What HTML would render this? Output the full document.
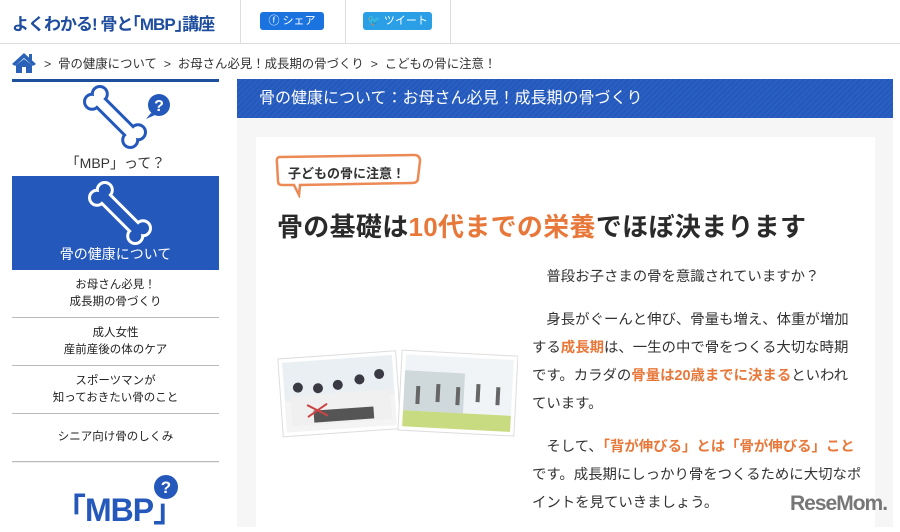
<!DOCTYPE html>
<html><head><meta charset="utf-8"><style>
*{margin:0;padding:0;box-sizing:border-box}
body{width:900px;height:527px;overflow:hidden;background:#fff;font-family:"Liberation Sans","Noto Sans CJK JP",sans-serif;color:#333;position:relative}
.abs{position:absolute}
.hdr{left:0;top:0;width:900px;height:44px;border-bottom:1px solid #ddd}
.logo{left:12px;top:10px;font-size:17px;font-weight:bold;color:#1e4c9e;letter-spacing:-1px}
.vl{top:0;width:1px;height:43px;background:#ddd}
.btn{top:12px;height:18px;border-radius:3px;color:#fff;font-size:11px;line-height:18px;text-align:center}
.bc{left:44px;top:54px;font-size:12.4px;color:#333;white-space:nowrap}
.side{left:12px;top:79px;width:207px}
.menu{height:48px;border-bottom:1px solid #bbb;text-align:center;font-size:11.5px;line-height:17px;display:flex;align-items:center;justify-content:center;color:#222}
.main{left:237px;top:79px;width:656px;height:448px;background:#f6f6f6}
.bar{left:237px;top:79px;width:656px;height:39px;background:repeating-linear-gradient(135deg,#2458bb 0 2px,#2a60c2 2px 4px);color:#fff;font-size:16px;line-height:39px;padding-left:22px}
.card{left:256px;top:137px;width:619px;height:390px;background:#fff}
.p{left:532px;width:330px;font-size:14.4px;line-height:28px;color:#333}
.o{color:#e8783a;font-weight:bold}
</style></head><body>
<div class="abs hdr"></div>
<div class="abs logo">よくわかる! 骨と｢MBP｣講座</div>
<div class="abs vl" style="left:240px"></div>
<div class="abs vl" style="left:345px"></div>
<div class="abs vl" style="left:450px"></div>
<div class="abs btn" style="left:260px;width:64px;background:#1b73e0">ⓕ シェア</div>
<div class="abs btn" style="left:363px;width:69px;background:#2b9fe6">🐦 ツイート</div>
<svg class="abs" style="left:11px;top:52px" width="26" height="22" viewBox="0 0 26 22"><path d="M13 1 L1 12 L4 14 L13 6 L22 14 L25 12 Z" fill="#2a62b8"/><path d="M5 13 L13 7 L21 13 V21 H15 V15 H11 V21 H5 Z" fill="#2a62b8"/><rect x="18" y="2" width="3" height="6" fill="#2a62b8"/></svg>
<div class="abs bc">&gt;&nbsp; 骨の健康について &nbsp;&gt;&nbsp; お母さん必見！成長期の骨づくり &nbsp;&gt;&nbsp; こどもの骨に注意！</div>

<div class="abs side">
 <div style="height:3px;background:#1d4f9a"></div>
 <div style="height:94px;position:relative;background:#fff">
  <svg class="abs" style="left:63px;top:0px" width="100" height="70" viewBox="0 0 100 70">
   <g transform="translate(40,35) rotate(45)"><g stroke="#2458bb" stroke-width="6" fill="#2458bb"><circle cx="-27" cy="-5.5" r="6"/><circle cx="-27" cy="5.5" r="6"/><circle cx="27" cy="-5.5" r="6"/><circle cx="27" cy="5.5" r="6"/><rect x="-27" y="-4.5" width="54" height="9"/></g><g fill="#fff"><circle cx="-27" cy="-5.5" r="6"/><circle cx="-27" cy="5.5" r="6"/><circle cx="27" cy="-5.5" r="6"/><circle cx="27" cy="5.5" r="6"/><rect x="-27" y="-4.5" width="54" height="9"/></g></g>
   <circle cx="84" cy="23" r="11" fill="#2458bb"/><path d="M76 31 L71 37 L80 33Z" fill="#2458bb"/><text x="84" y="29" font-size="16" font-weight="bold" fill="#fff" text-anchor="middle" font-family="Liberation Sans">?</text>
  </svg>
  <div class="abs" style="left:0;width:207px;top:71px;text-align:center;font-size:14px;color:#333">「MBP」って？</div>
 </div>
 <div style="height:94px;position:relative;background:#2458bb">
  <svg class="abs" style="left:68px;top:2px" width="80" height="70" viewBox="0 0 80 70">
   <g transform="translate(40,35) rotate(45)"><g stroke="#fff" stroke-width="6" fill="#fff"><circle cx="-27" cy="-5.5" r="6"/><circle cx="-27" cy="5.5" r="6"/><circle cx="27" cy="-5.5" r="6"/><circle cx="27" cy="5.5" r="6"/><rect x="-27" y="-4.5" width="54" height="9"/></g><g fill="#2458bb"><circle cx="-27" cy="-5.5" r="6"/><circle cx="-27" cy="5.5" r="6"/><circle cx="27" cy="-5.5" r="6"/><circle cx="27" cy="5.5" r="6"/><rect x="-27" y="-4.5" width="54" height="9"/></g></g>
  </svg>
  <div class="abs" style="left:0;width:207px;top:68px;text-align:center;font-size:14px;color:#fff">骨の健康について</div>
 </div>
 <div class="menu">お母さん必見！<br>成長期の骨づくり</div>
 <div class="menu">成人女性<br>産前産後の体のケア</div>
 <div class="menu">スポーツマンが<br>知っておきたい骨のこと</div>
 <div class="menu">シニア向け骨のしくみ</div>
 <div style="height:70px;position:relative;border-top:1px solid #eee">
  <div class="abs" style="left:58px;top:22px;font-size:32px;font-weight:bold;color:#2458bb;letter-spacing:-1px">｢MBP｣</div>
  <svg class="abs" style="left:140px;top:10px" width="30" height="30"><circle cx="14" cy="14" r="12" fill="#2458bb"/><text x="14" y="20" font-size="17" font-weight="bold" fill="#fff" text-anchor="middle" font-family="Liberation Sans">?</text></svg>
 </div>
</div>

<div class="abs main"></div>
<div class="abs bar">骨の健康について：お母さん必見！成長期の骨づくり</div>
<div class="abs card"></div>
<svg class="abs" style="left:272px;top:153px" width="155" height="45" viewBox="0 0 155 45"><path d="M8 4 Q4 4 5 10 L6 28 Q6 32 10 32 L22 32 L27 42 L28 32 L140 30 Q146 30 146 25 L148 8 Q148 2 142 2 Z" fill="#fff" stroke="#ec8a55" stroke-width="2.5"/></svg>
<div class="abs" style="left:288px;top:163px;font-size:13px;font-weight:bold;color:#333">子どもの骨に注意！</div>
<div class="abs" style="left:277px;top:207px;font-size:26px;font-weight:bold;color:#2a2a2a;letter-spacing:0.3px">骨の基礎は<span style="color:#e8783a">10代までの栄養</span>でほぼ決まります</div>

<svg class="abs" style="left:276px;top:343px" width="242" height="96" viewBox="0 0 242 96">
 <g transform="rotate(-4 60 45)"><rect x="4" y="12" width="118" height="78" fill="#fff" stroke="#ddd"/><rect x="8" y="16" width="110" height="70" fill="#e9eff3"/><rect x="8" y="55" width="110" height="31" fill="#f4f4f4"/><g fill="#3a3a44"><circle cx="22" cy="42" r="5"/><circle cx="42" cy="44" r="5"/><circle cx="62" cy="42" r="5"/><circle cx="84" cy="38" r="5"/><circle cx="104" cy="34" r="5"/></g><g fill="#f0f0f0"><rect x="14" y="50" width="100" height="30"/></g><g fill="#555"><rect x="36" y="66" width="60" height="12"/></g><path d="M30 60 L50 72 M50 60 L30 72" stroke="#c44" stroke-width="2"/></g>
 <g transform="rotate(3 180 50)"><rect x="124" y="10" width="116" height="80" fill="#fff" stroke="#ddd"/><rect x="128" y="14" width="108" height="72" fill="#f1f4f6"/><rect x="128" y="30" width="60" height="40" fill="#cfd8db"/><rect x="128" y="70" width="108" height="16" fill="#c8db80"/><g fill="#666"><rect x="140" y="45" width="4" height="18"/><rect x="160" y="42" width="4" height="18"/><rect x="180" y="44" width="4" height="18"/><rect x="200" y="40" width="4" height="18"/><rect x="220" y="42" width="4" height="18"/></g></g>
</svg>

<div class="abs p" style="top:263px;text-indent:1em">普段お子さまの骨を意識されていますか？</div>
<div class="abs p" style="top:306px;text-indent:1em">身長がぐーんと伸び、骨量も増え、体重が増加する<span class="o">成長期</span>は、一生の中で骨をつくる大切な時期です。カラダの<span class="o">骨量は20歳までに決まる</span>といわれています。</div>
<div class="abs p" style="top:433px;text-indent:1em;width:335px">そして、<span class="o">「背が伸びる」とは「骨が伸びる」こと</span>です。成長期にしっかり骨をつくるために大切なポイントを見ていきましょう。</div>
<div class="abs" style="left:790px;top:492px;font-size:21px;font-weight:bold;color:#777;letter-spacing:-1px">ReseMom.</div>
</body></html>
